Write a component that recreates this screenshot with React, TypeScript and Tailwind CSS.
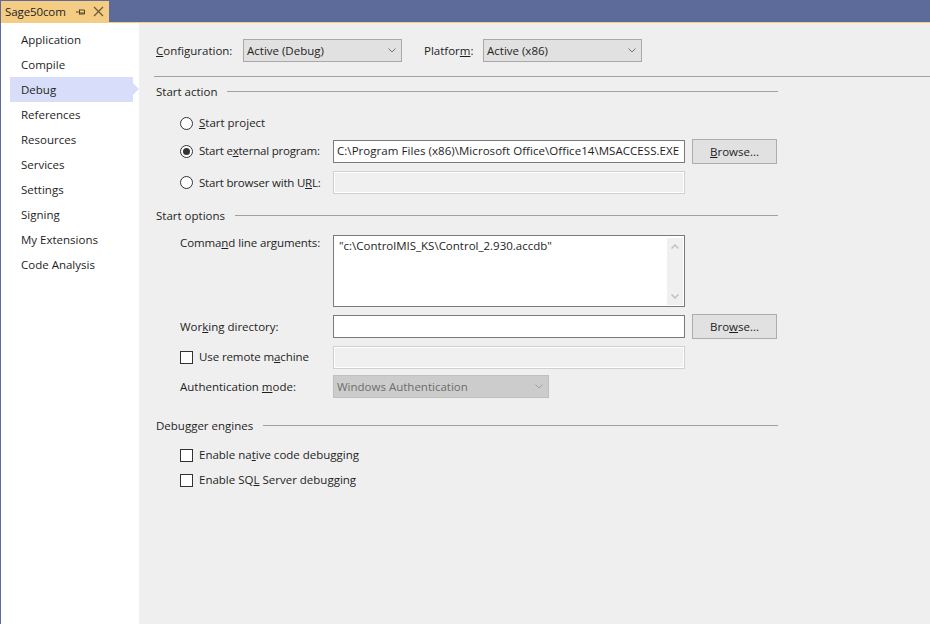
import type { ReactNode } from "react";

const navItems = ["Application", "Compile", "Debug", "References", "Resources", "Services", "Settings", "Signing", "My Extensions", "Code Analysis"];

function Chevron({ up = false, color = "#707070", weight = 1 }: { up?: boolean; color?: string; weight?: number }) {
  return (
    <svg width="8" height="5" viewBox="0 0 8 5" fill="none" className={up ? "rotate-180" : ""}>
      <path d="M0.5 0.5L4 4L7.5 0.5" stroke={color} strokeWidth={weight} />
    </svg>
  );
}

function Select({ value, width, disabled = false }: { value: string; width: string; disabled?: boolean }) {
  return (
    <div
      className={`flex h-[23px] items-center justify-between border pl-[3px] pr-[5px] ${width} ${
        disabled ? "border-[#bfbfbf] bg-[#cccccc] text-[#6d6d6d]" : "border-[#a9a9a9] bg-[#e1e1e1] text-[#1e1e1e]"
      }`}
    >
      <span>{value}</span>
      <Chevron color={disabled ? "#a0a0a0" : "#707070"} />
    </div>
  );
}

function Browse({ children }: { children: ReactNode }) {
  return (
    <div className="flex h-[25px] w-[85px] items-center justify-center border border-[#adadad] bg-[#e1e1e1] text-[#1e1e1e]">
      {children}
    </div>
  );
}

function Input({ value, disabled = false }: { value?: string; disabled?: boolean }) {
  return (
    <div
      className={`flex h-[23px] w-[352px] items-center overflow-hidden whitespace-nowrap border pl-[3px] tracking-[0.05px] ${
        disabled ? "border-[#d0d0d0] bg-[#f0f0f0] shadow-[inset_0_0_0_1px_#ffffff]" : "border-[#7a7a7a] bg-white"
      }`}
    >
      <span className="-mt-px">{value}</span>
    </div>
  );
}

function Radio({ checked = false }: { checked?: boolean }) {
  return (
    <span className="flex h-[13px] w-[13px] items-center justify-center rounded-full border border-[#333333] bg-white">
      {checked && <span className="h-[7px] w-[7px] rounded-full bg-[#333333]" />}
    </span>
  );
}

function Checkbox() {
  return <span className="h-[13px] w-[13px] border border-[#333333] bg-white" />;
}

function Section({ title, className }: { title: string; className: string }) {
  return (
    <div className={`flex h-[16px] w-[624px] items-center gap-[10px] pl-[2px] ${className}`}>
      <span className="mt-[2px] whitespace-nowrap">{title}</span>
      <span className="h-px flex-1 bg-[#a0a0a0]" />
    </div>
  );
}

// label column runs from x=180 to the fields at x=333
function Row({ label, children, className = "" }: { label: ReactNode; children?: ReactNode; className?: string }) {
  return (
    <div className={`flex items-center pl-[41px] ${className}`}>
      <div className="flex w-[153px] shrink-0 items-center whitespace-nowrap">{label}</div>
      {children}
    </div>
  );
}

function Choice({ mark, children, className = "" }: { mark: ReactNode; children: ReactNode; className?: string }) {
  return (
    <span className="flex items-center gap-[6px]">
      {mark}
      <span className={className}>{children}</span>
    </span>
  );
}

export default function App() {
  return (
    <div
      className="flex h-[624px] w-[930px] flex-col overflow-hidden bg-[#5c6b99] text-[11.5px] text-[#1e1e1e]"
      style={{ fontFamily: '"Open Sans", "Noto Sans", sans-serif' }}
    >
      {/* Document tab */}
      <div className="flex h-[22px] shrink-0 items-end pl-px">
        <div className="flex h-[21px] w-[108px] items-center bg-[#f5cc84] pl-[4px] text-[#1e1e1e]">
          <span className="w-[71px] tracking-[-0.1px]">Sage50com</span>
          <svg width="10" height="10" viewBox="0 0 10 10" fill="none">
            <path d="M0 5H3M3.5 2.5V7.5M3.5 3H8.5V7H3.5M3.5 6H8.5" stroke="#55462a" strokeWidth="1" />
          </svg>
          <svg width="11" height="11" viewBox="0 0 11 11" fill="none" className="ml-[7px]">
            <path d="M1 1L10 10M10 1L1 10" stroke="#6b5a3a" strokeWidth="1.3" />
          </svg>
        </div>
      </div>

      <div className="flex min-h-0 flex-1 pl-px">
        {/* Property page list */}
        <nav className="w-[138px] shrink-0 border-t border-[#f5cc84] bg-white pl-[9px] pt-[4px]">
          {navItems.map((item) => (
            <div
              key={item}
              className={`relative flex h-[25px] w-[123px] items-center pl-[11px] ${item === "Debug" ? "bg-[#d8defa]" : ""}`}
            >
              {item}
              {item === "Debug" && (
                <span className="absolute left-full top-[6px] h-0 w-0 border-y-[6px] border-l-[6px] border-y-transparent border-l-[#d8defa]" />
              )}
            </div>
          ))}
        </nav>

        {/* Debug page */}
        <main className="flex-1 border-t border-[#f5cc84] bg-[#efefef]">
          <div className="flex items-center pl-[17px] pt-[16px]">
            <span className="w-[87px] whitespace-nowrap">
              <u>C</u>onfiguration:
            </span>
            <Select value="Active (Debug)" width="w-[159px]" />
            <span className="ml-[22px] w-[59px] whitespace-nowrap">
              Platfor<u>m</u>:
            </span>
            <Select value="Active (x86)" width="w-[159px]" />
          </div>
          <div className="ml-[15px] mt-[14px] h-px bg-[#a0a0a0]" />

          <Section title="Start action" className="ml-[15px] mt-[6px]" />
          <Row className="mt-[16px] h-[16px]" label={<Choice mark={<Radio />}><u>S</u>tart project</Choice>} />
          <Row
            className="mt-[8px] h-[25px]"
            label={<Choice mark={<Radio checked />} className="-mt-px tracking-[-0.2px]">Start e<u>x</u>ternal program:</Choice>}
          >
            <Input value="C:\Program Files (x86)\Microsoft Office\Office14\MSACCESS.EXE" />
            <div className="ml-[7px]">
              <Browse>
                <span><u>B</u>rowse...</span>
              </Browse>
            </div>
          </Row>
          <Row
            className="mt-[7px] h-[23px]"
            label={<Choice mark={<Radio />} className="tracking-[-0.2px]">Start browser with U<u>R</u>L:</Choice>}
          >
            <Input disabled />
          </Row>

          <Section title="Start options" className="ml-[15px] mt-[13px]" />
          <div className="mt-[12px] flex items-start pl-[41px]">
            <div className="-mt-px w-[153px] shrink-0 tracking-[-0.1px]">
              Comma<u>n</u>d line arguments:
            </div>
            <div className="flex h-[72px] w-[352px] justify-between border border-[#7a7a7a] bg-white pl-[5px] pt-px">
              <span>"c:\ControlMIS_KS\Control_2.930.accdb"</span>
              <div className="m-px flex w-[16px] flex-col items-center justify-between bg-[#f0f0f0] py-[6px]">
                <Chevron up color="#c0c0c0" weight={1.5} />
                <Chevron color="#c0c0c0" weight={1.5} />
              </div>
            </div>
          </div>
          <Row
            className="mt-[7px] h-[25px]"
            label={<span>Wor<u>k</u>ing directory:</span>}
          >
            <Input />
            <div className="ml-[7px]">
              <Browse>
                <span>Bro<u>w</u>se...</span>
              </Browse>
            </div>
          </Row>
          <Row
            className="mt-[7px] h-[23px]"
            label={<Choice mark={<Checkbox />} className="-mt-px tracking-[-0.1px]">Use remote m<u>a</u>chine</Choice>}
          >
            <Input disabled />
          </Row>
          <Row className="mt-[6px] h-[23px]" label={<span>Authentication <u>m</u>ode:</span>}>
            <Select value="Windows Authentication" width="w-[216px]" disabled />
          </Row>

          <Section title="Debugger engines" className="ml-[15px] mt-[19px]" />
          <Row className="mt-[14px] h-[16px]" label={<Choice mark={<Checkbox />}>Enable na<u>t</u>ive code debugging</Choice>} />
          <Row className="mt-[9px] h-[16px]" label={<Choice mark={<Checkbox />}>Enable SQ<u>L</u> Server debugging</Choice>} />
        </main>
      </div>
    </div>
  );
}
